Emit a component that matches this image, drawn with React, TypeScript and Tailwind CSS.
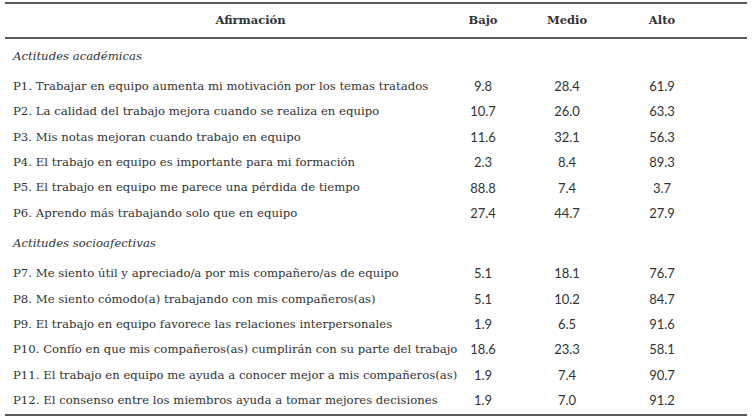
const rows1: [string, string, string, string][] = [
  ["P1. Trabajar en equipo aumenta mi motivación por los temas tratados", "9.8", "28.4", "61.9"],
  ["P2. La calidad del trabajo mejora cuando se realiza en equipo", "10.7", "26.0", "63.3"],
  ["P3. Mis notas mejoran cuando trabajo en equipo", "11.6", "32.1", "56.3"],
  ["P4. El trabajo en equipo es importante para mi formación", "2.3", "8.4", "89.3"],
  ["P5. El trabajo en equipo me parece una pérdida de tiempo", "88.8", "7.4", "3.7"],
  ["P6. Aprendo más trabajando solo que en equipo", "27.4", "44.7", "27.9"],
];

const rows2: [string, string, string, string][] = [
  ["P7. Me siento útil y apreciado/a por mis compañero/as de equipo", "5.1", "18.1", "76.7"],
  ["P8. Me siento cómodo(a) trabajando con mis compañeros(as)", "5.1", "10.2", "84.7"],
  ["P9. El trabajo en equipo favorece las relaciones interpersonales", "1.9", "6.5", "91.6"],
  ["P10. Confío en que mis compañeros(as) cumplirán con su parte del trabajo", "18.6", "23.3", "58.1"],
  ["P11. El trabajo en equipo me ayuda a conocer mejor a mis compañeros(as)", "1.9", "7.4", "90.7"],
  ["P12. El consenso entre los miembros ayuda a tomar mejores decisiones", "1.9", "7.0", "91.2"],
];

const grid = "grid grid-cols-[435px_86px_82px_108px_1fr] items-center";

function Row({ r }: { r: [string, string, string, string] }) {
  return (
    <div className={`${grid} h-[25.4px]`}>
      <div className="pl-[8px] whitespace-nowrap">{r[0]}</div>
      {r.slice(1).map((v, i) => (
        <div key={i} className="text-center font-['Lato',sans-serif] text-[13px]">
          {v}
        </div>
      ))}
      <div />
    </div>
  );
}

function Section({ title }: { title: string }) {
  return (
    <div className="h-[35px] flex items-center pl-[8px] italic">{title}</div>
  );
}

export default function App() {
  return (
    <div className="w-[752px] h-[416px] bg-white pt-[2px] text-[#333333] font-['DejaVu_Serif',serif] text-[11.7px]">
      <div className="ml-[5px] w-[742px] border-t-2 border-b-2 border-[#5a5a5a]">
        <div className={`${grid} h-[35px] border-b-2 border-[#5a5a5a] font-bold text-[11.5px]`}>
          <div className="text-center pl-[56px]">Afirmación</div>
          <div className="text-center">Bajo</div>
          <div className="text-center">Medio</div>
          <div className="text-center">Alto</div>
          <div />
        </div>
        <Section title="Actitudes académicas" />
        {rows1.map((r) => (
          <Row key={r[0]} r={r} />
        ))}
        <Section title="Actitudes socioafectivas" />
        {rows2.map((r) => (
          <Row key={r[0]} r={r} />
        ))}
      </div>
    </div>
  );
}
